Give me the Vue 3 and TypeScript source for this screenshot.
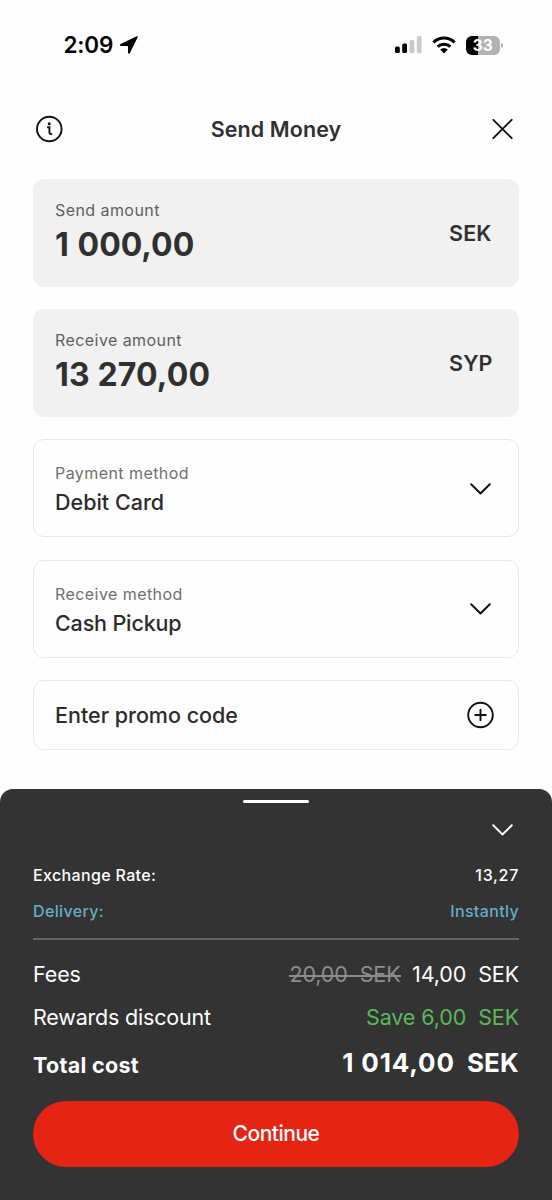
<script setup lang="ts">
interface Amount {
  id: string
  label: string
  value: string
  currency: string
}

interface Method {
  id: string
  label: string
  value: string
}

const amounts: Amount[] = [
  { id: 'send', label: 'Send amount', value: '1 000,00', currency: 'SEK' },
  { id: 'receive', label: 'Receive amount', value: '13 270,00', currency: 'SYP' },
]

const methods: Method[] = [
  { id: 'payment', label: 'Payment method', value: 'Debit Card' },
  { id: 'pickup', label: 'Receive method', value: 'Cash Pickup' },
]
</script>

<template>
  <div class="screen">
    <div class="status">
      <div class="clock">
        <span class="time">2:09</span>
        <svg class="arrow" width="20" height="20" viewBox="0 0 20 20">
          <path d="M17.800 1.300c.9-.4 1.300 0 .9.900L10.900 18c-.5 1-1.900.8-1.900-.5v-6.200c0-.3-.1-.4-.4-.4H2.100c-1.300 0-1.500-1.400-.5-1.900z" />
        </svg>
      </div>
      <div class="indicators">
        <svg class="signal" width="28" height="18" viewBox="0 0 28 18">
          <rect x="0" y="10.500" width="4.800" height="6.500" rx="1.500" fill="#000" />
          <rect x="7.200" y="7.500" width="4.800" height="9.500" rx="1.500" fill="#000" />
          <rect x="14.500" y="4" width="4.800" height="13" rx="1.500" fill="#cbcbcb" />
          <rect x="21.800" y="0" width="4.800" height="17" rx="1.500" fill="#cbcbcb" />
        </svg>
        <svg class="wifi" width="24" height="18" viewBox="0 0 24 18">
          <g fill="none" stroke="#000" stroke-width="3">
            <path d="M1.500 6.300a15.200 15.200 0 0 1 21 0" />
            <path d="M5.600 10.700a9.300 9.300 0 0 1 12.800 0" />
          </g>
          <path d="M8.200 13.600a5.500 5.500 0 0 1 7.600 0L12 17.400z" />
        </svg>
        <div class="battery"><span class="charge">33</span></div>
        <span class="terminal"></span>
      </div>
    </div>

    <header class="header">
      <svg width="28" height="28" viewBox="0 0 28 28" fill="none" stroke="#111" stroke-width="1.900">
        <circle cx="14.300" cy="14" r="12.300" />
        <path d="M12.100 12.300h2.300v4.600q0 2.200 2.300 2.200h.5" />
        <circle cx="14.200" cy="8.700" r="1.500" fill="#111" stroke="none" />
      </svg>
      <h1 class="title">Send Money</h1>
      <svg class="close" width="22" height="22" viewBox="0 0 22 22" fill="none" stroke="#111" stroke-width="1.900" stroke-linecap="round">
        <path d="M1.300 1.800 19.700 20.200M19.700 1.800 1.300 20.200" />
      </svg>
    </header>

    <main class="form">
      <section v-for="item in amounts" :key="item.id" class="card amount">
        <div>
          <div class="label">{{ item.label }}</div>
          <div class="figure" :class="item.id">{{ item.value }}</div>
        </div>
        <span class="currency">{{ item.currency }}</span>
      </section>

      <section v-for="item in methods" :key="item.id" class="card method">
        <div>
          <div class="label">{{ item.label }}</div>
          <div class="choice" :class="item.id">{{ item.value }}</div>
        </div>
        <svg class="chevron" width="22" height="12" viewBox="0 0 22 12">
          <path d="M2.200 1.300 11.500 10.500 20.800 1.300" />
        </svg>
      </section>

      <section class="card promo">
        <span class="choice enter">Enter promo code</span>
        <svg class="plus" width="28" height="28" viewBox="0 0 28 28">
          <circle cx="13.500" cy="14" r="12.300" />
          <path d="M13.500 8.700v10.600M8.200 14h10.600" />
        </svg>
      </section>
    </main>

    <section class="sheet">
      <div class="handle"></div>
      <div class="collapse">
        <svg class="chevron" width="22" height="12" viewBox="0 0 22 12">
          <path d="M1.200 1.300 10.500 10.500 19.800 1.300" />
        </svg>
      </div>
      <div class="row small">
        <span class="rate">Exchange Rate:</span>
        <span class="rate-value">13,27</span>
      </div>
      <div class="row small info">
        <span class="delivery">Delivery:</span>
        <span class="instantly">Instantly</span>
      </div>
      <div class="divider"></div>
      <div class="row line">
        <span class="fees">Fees</span>
        <span class="prices"><span class="old">20,00&nbsp; SEK</span><span>14,00&nbsp; SEK</span></span>
      </div>
      <div class="row line second">
        <span class="rewards">Rewards discount</span>
        <span class="save">Save 6,00&nbsp; SEK</span>
      </div>
      <div class="row total">
        <span class="total-label">Total cost</span>
        <span class="total-value"><span class="sum">1 014,00</span><span class="unit">SEK</span></span>
      </div>
      <button class="continue" type="button">Continue</button>
    </section>
  </div>
</template>

<style>
body {
  margin: 0;
  background: #fff;
}
</style>

<style scoped>
.screen {
  width: 552px;
  height: 1200px;
  overflow: hidden;
  display: flex;
  flex-direction: column;
  background: #fefefe;
  color: #303030;
  font-family: Inter, "Liberation Sans", sans-serif;
  white-space: nowrap;
}
.status {
  height: 90px;
  box-sizing: border-box;
  padding: 0 49px 0 63.500px;
  display: flex;
  align-items: center;
  justify-content: space-between;
  color: #000;
}
.clock,
.indicators {
  display: flex;
  align-items: center;
}
.time {
  width: 50px;
  margin-top: -1px;
  font-size: 22.500px;
  font-weight: 600;
  letter-spacing: -0.200px;
}
.arrow {
  margin-left: 5px;
}
.signal {
  margin-right: 9px;
}
.wifi {
  margin-right: 9.500px;
}
.battery {
  width: 34.500px;
  height: 19px;
  border-radius: 6px;
  background: linear-gradient(90deg, #000 0 12px, #b2b2b2 12px);
  display: flex;
  align-items: center;
  justify-content: center;
}
.charge {
  color: #fff;
  font-size: 15.500px;
  font-weight: 700;
  line-height: 19px;
}
.terminal {
  width: 2px;
  height: 5px;
  margin-left: 1px;
  border-radius: 0 2px 2px 0;
  background: #b2b2b2;
}
.header {
  height: 78px;
  box-sizing: border-box;
  padding: 0 38px 0 35px;
  display: grid;
  grid-template-columns: 28px 1fr 22px;
  align-items: center;
}
.title {
  margin: 0;
  padding-right: 3px;
  text-align: center;
  font-size: 21.500px;
  font-weight: 600;
  line-height: 30px;
  letter-spacing: 0.100px;
}
.form {
  height: 621px;
  box-sizing: border-box;
  padding: 11px 33px 0;
  display: flex;
  flex-direction: column;
}
.card {
  box-sizing: border-box;
  border-radius: 11px;
  display: flex;
  justify-content: space-between;
}
.amount {
  height: 108px;
  margin-bottom: 22px;
  padding: 20px 27px 0 22px;
  background: #f1f1f1;
}
.label {
  font-size: 16px;
  line-height: 23px;
  font-weight: 400;
  letter-spacing: 0.430px;
  color: #606060;
}
.figure {
  margin-top: 1px;
  font-size: 32px;
  line-height: 44px;
  font-weight: 700;
  letter-spacing: 0.150px;
}
.figure.send {
  letter-spacing: 0;
  word-spacing: 1.200px;
}
.currency {
  width: 43px;
  margin-top: 19px;
  height: 30px;
  font-size: 21.500px;
  line-height: 30px;
  font-weight: 600;
  letter-spacing: 0.150px;
}
.method {
  height: 98px;
  margin-bottom: 22.500px;
  padding: 21px 27px 0 21px;
  border: 1.500px solid #e8e8e8;
}
.method .label {
  line-height: 24px;
  color: #707070;
}
.choice {
  font-size: 21.500px;
  line-height: 34px;
  font-weight: 450;
  color: #2c2c2c;
}
.choice.pickup {
  letter-spacing: -0.150px;
}
.chevron {
  fill: none;
  stroke: #111;
  stroke-width: 2;
  stroke-linecap: round;
  stroke-linejoin: round;
}
.method .chevron {
  margin-top: 21.500px;
}
.promo {
  height: 70px;
  padding: 0 23px 0 21px;
  align-items: center;
  border: 1.500px solid #e8e8e8;
}
.plus {
  fill: none;
  stroke: #111;
  stroke-width: 1.900;
  stroke-linecap: round;
}
.sheet {
  height: 411px;
  box-sizing: border-box;
  padding: 11px 33px 0;
  display: flex;
  flex-direction: column;
  background: #333;
  color: #fff;
  border-radius: 13px 13px 0 0;
}
.handle {
  width: 66px;
  height: 3px;
  border-radius: 2px;
  align-self: center;
  background: #fff;
}
.collapse {
  height: 54px;
  box-sizing: border-box;
  padding: 21px 5px 0 0;
  display: flex;
  justify-content: flex-end;
}
.collapse .chevron {
  stroke: #fff;
}
.row {
  display: flex;
  justify-content: space-between;
}
.small {
  height: 36px;
  line-height: 36px;
  font-size: 16px;
  font-weight: 450;
  letter-spacing: 0.350px;
}
.rate-value {
  letter-spacing: 0.700px;
}
.info {
  color: #67adc3;
}
.divider {
  height: 2px;
  margin-top: 9px;
  background: #646464;
}
.line {
  height: 42px;
  margin-top: 13px;
  line-height: 42px;
  font-size: 21.500px;
  font-weight: 400;
  letter-spacing: -0.100px;
}
.line.second {
  margin-top: 1px;
}
.rewards {
  letter-spacing: -0.200px;
}
.prices {
  display: flex;
  gap: 11.500px;
}
.old {
  position: relative;
  color: #8c8c8c;
}
.old::after {
  content: "";
  position: absolute;
  left: 0;
  right: 0;
  top: 22px;
  height: 2px;
  background: #8c8c8c;
}
.save {
  color: #5cb85c;
}
.total {
  height: 50px;
  line-height: 50px;
  font-weight: 700;
}
.total-label {
  margin-top: 2px;
  font-size: 21.500px;
  letter-spacing: 0.300px;
}
.total-value {
  font-size: 26px;
}
.sum {
  letter-spacing: 0.850px;
}
.unit {
  margin-left: 12px;
  letter-spacing: 0.200px;
}
.continue {
  height: 66px;
  margin-top: 13px;
  padding: 0;
  border: 0;
  border-radius: 33px;
  background: #e52413;
  color: #fff;
  font: 450 21px/66px Inter, "Liberation Sans", sans-serif;
  letter-spacing: -0.500px;
}
</style>
